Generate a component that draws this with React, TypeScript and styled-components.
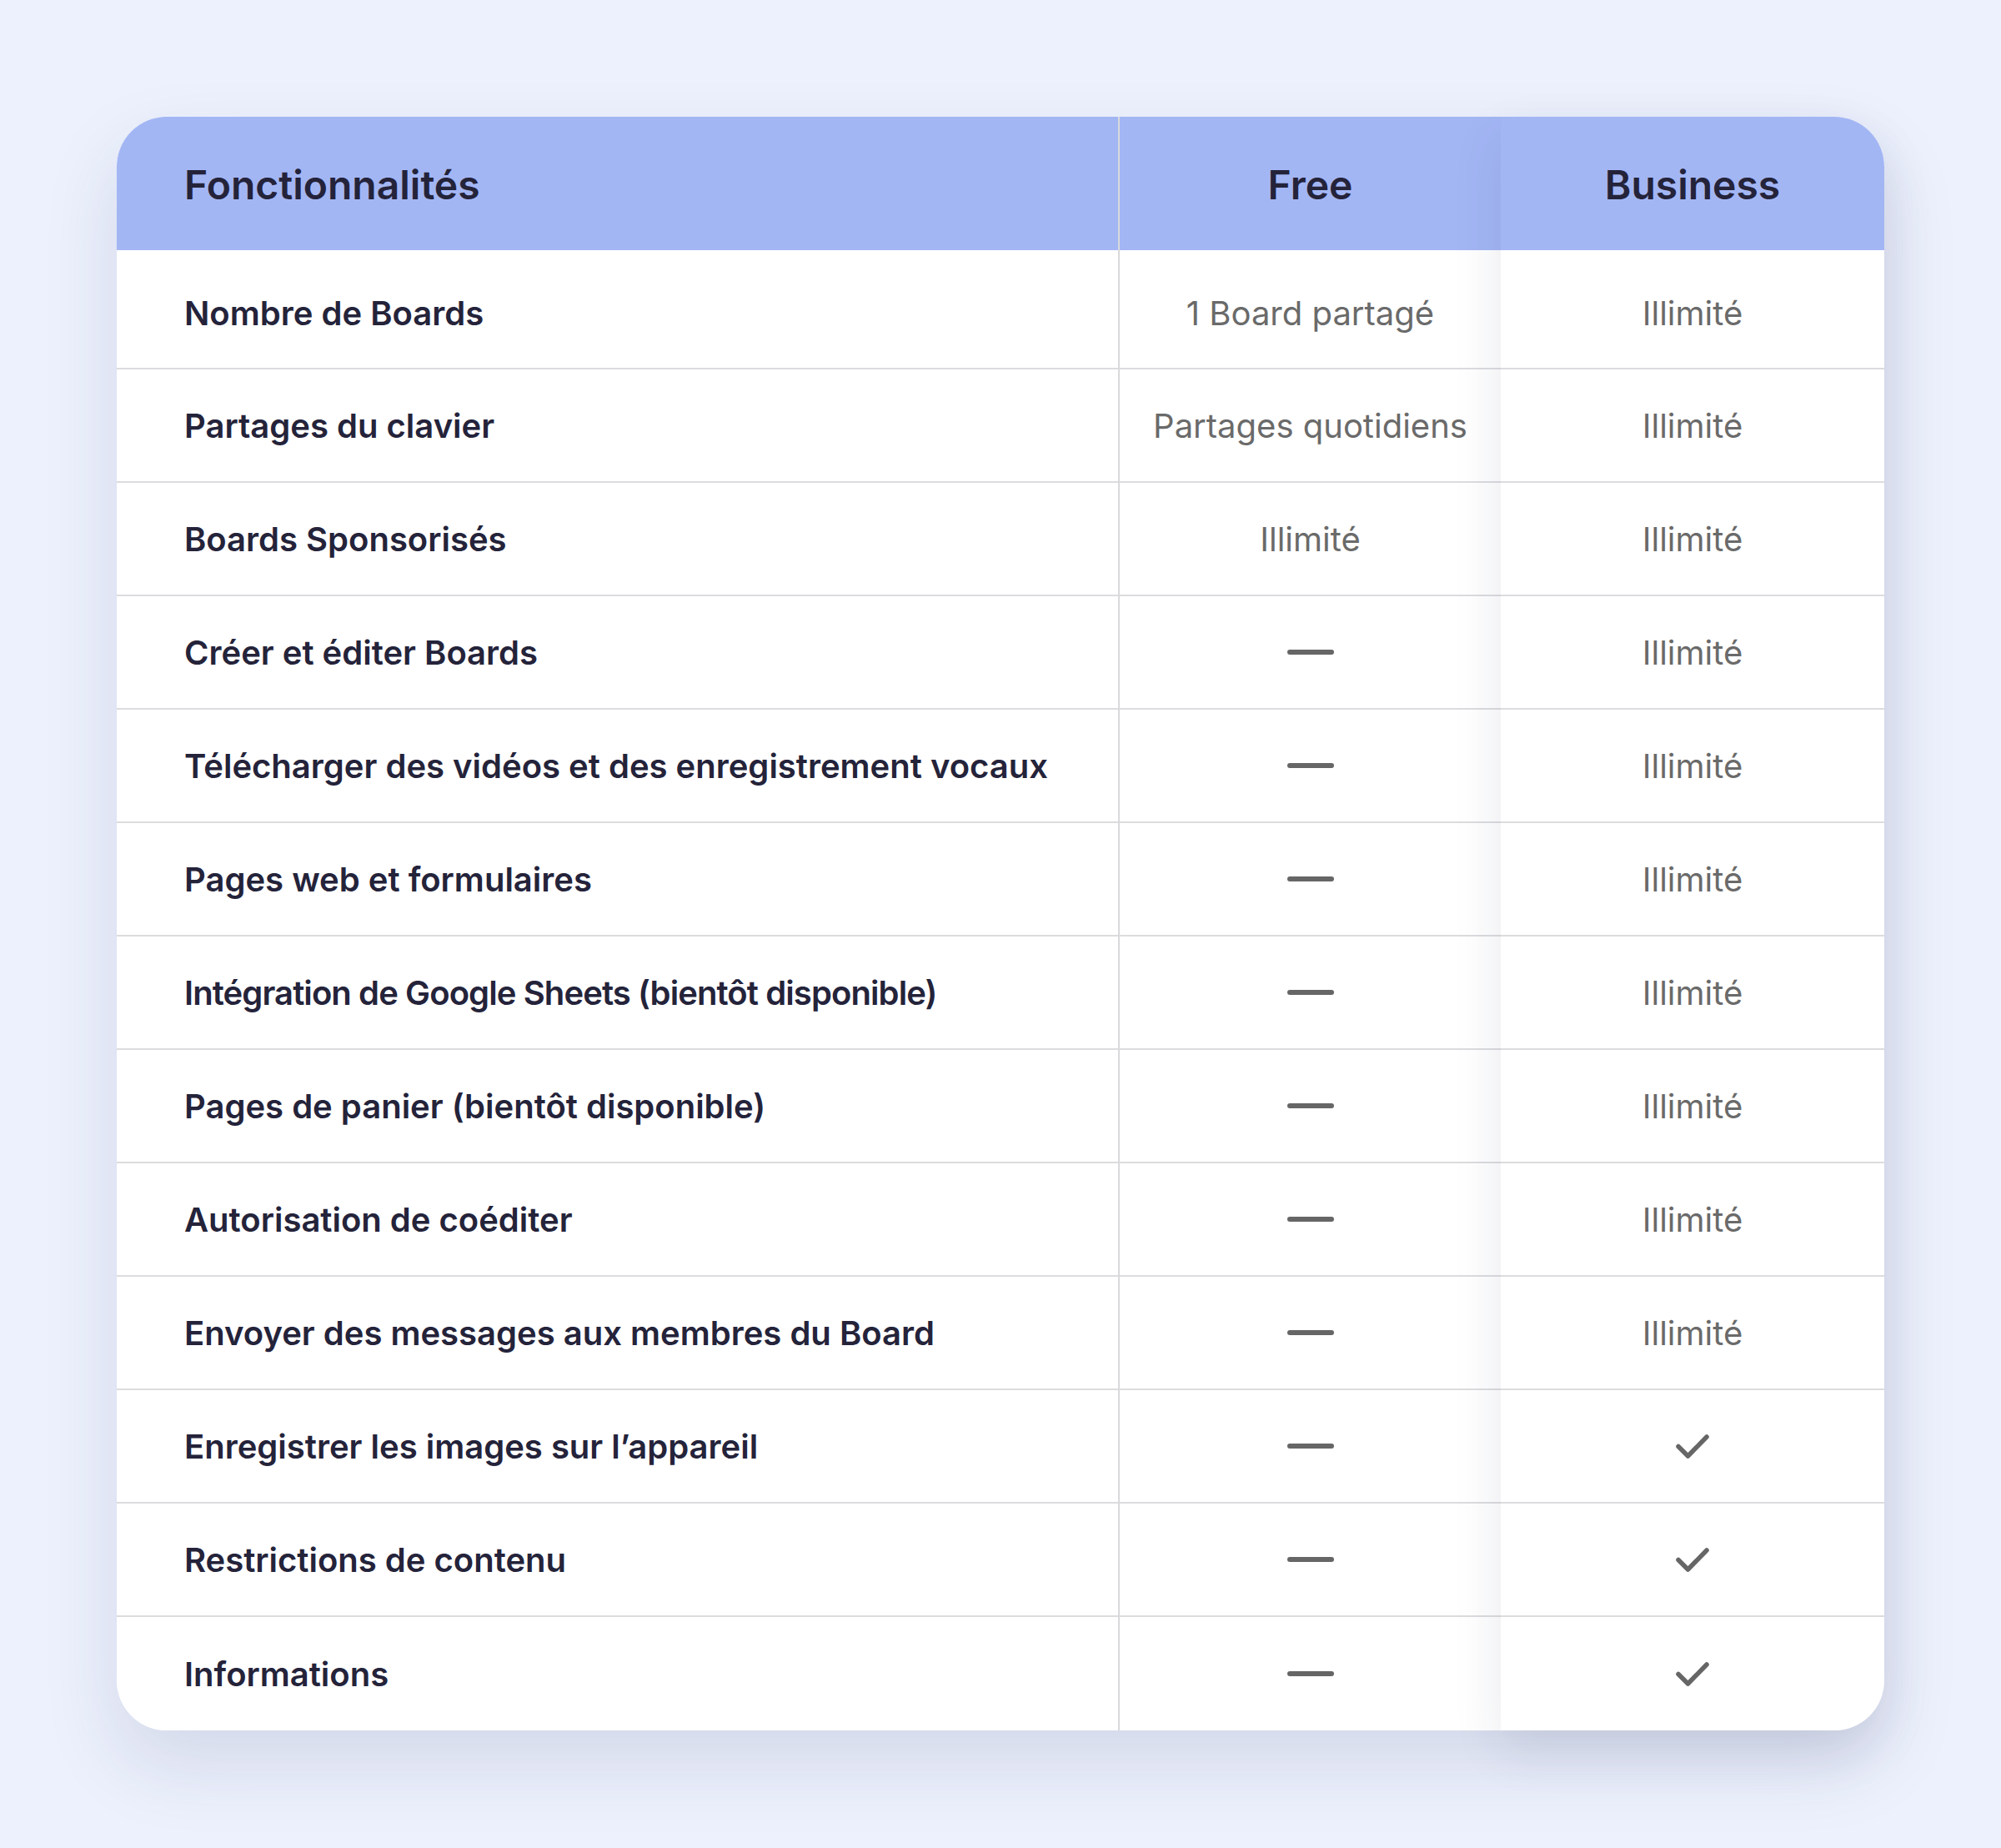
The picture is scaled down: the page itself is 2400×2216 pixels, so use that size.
import React from "react";
import styled, { createGlobalStyle } from "styled-components";

type Value = string | "none" | "yes";

type Feature = {
  label: string;
  free: Value;
  business: Value;
  tight?: boolean;
};

const features: Feature[] = [
  { label: "Nombre de Boards", free: "1 Board partagé", business: "Illimité" },
  { label: "Partages du clavier", free: "Partages quotidiens", business: "Illimité" },
  { label: "Boards Sponsorisés", free: "Illimité", business: "Illimité" },
  { label: "Créer et éditer Boards", free: "none", business: "Illimité" },
  {
    label: "Télécharger des vidéos et des enregistrement vocaux",
    free: "none",
    business: "Illimité",
  },
  { label: "Pages web et formulaires", free: "none", business: "Illimité" },
  {
    label: "Intégration de Google Sheets (bientôt disponible)",
    free: "none",
    business: "Illimité",
    tight: true,
  },
  { label: "Pages de panier (bientôt disponible)", free: "none", business: "Illimité" },
  { label: "Autorisation de coéditer", free: "none", business: "Illimité" },
  {
    label: "Envoyer des messages aux membres du Board",
    free: "none",
    business: "Illimité",
  },
  { label: "Enregistrer les images sur l’appareil", free: "none", business: "yes" },
  { label: "Restrictions de contenu", free: "none", business: "yes" },
  { label: "Informations", free: "none", business: "yes" },
];

const GlobalStyle = createGlobalStyle`
  html, body {
    margin: 0;
    padding: 0;
    background: #edf1fd;
  }
  body {
    font-family: Inter, "Noto Sans", "Liberation Sans", sans-serif;
    -webkit-font-smoothing: antialiased;
  }
`;

const Page = styled.div`
  padding: 140px;
  min-height: 2216px;
  box-sizing: border-box;
`;

const Card = styled.div`
  display: flex;
  width: 2120px;
  border-radius: 60px;
  background: #ffffff;
  box-shadow: 0 40px 90px rgba(40, 52, 100, 0.13);
`;

const Column = styled.div<{ $width: number; $raised?: boolean; $divider?: boolean }>`
  display: flex;
  flex-direction: column;
  width: ${(p) => p.$width}px;
  flex-shrink: 0;
  background: #ffffff;
  position: relative;
  z-index: ${(p) => (p.$raised ? 1 : 0)};
  border-left: ${(p) => (p.$divider ? "2px solid #d9d9dc" : "none")};
  box-sizing: border-box;
  ${(p) =>
    p.$raised
      ? `
    border-top-right-radius: 60px;
    border-bottom-right-radius: 60px;
    box-shadow: 0 24px 60px rgba(30, 40, 80, 0.1);
  `
      : ""}
  &:first-child {
    border-top-left-radius: 60px;
    border-bottom-left-radius: 60px;
  }
`;

const HeadCell = styled.div<{ $align: "left" | "center"; $round?: "left" | "right" }>`
  height: 160px;
  display: flex;
  align-items: center;
  justify-content: ${(p) => (p.$align === "left" ? "flex-start" : "center")};
  padding-left: ${(p) => (p.$align === "left" ? "81px" : "0")};
  padding-top: 3px;
  background: #a3b6f4;
  color: #24233a;
  font-size: 48px;
  font-weight: 600;
  box-sizing: border-box;
  border-top-left-radius: ${(p) => (p.$round === "left" ? "60px" : "0")};
  border-top-right-radius: ${(p) => (p.$round === "right" ? "60px" : "0")};
`;

const Cell = styled.div<{ $align: "left" | "center"; $first?: boolean; $last?: boolean }>`
  height: ${(p) => (p.$first ? 143 : 136)}px;
  display: flex;
  align-items: center;
  justify-content: ${(p) => (p.$align === "left" ? "flex-start" : "center")};
  padding-left: ${(p) => (p.$align === "left" ? "81px" : "0")};
  padding-top: ${(p) => (p.$first ? 10 : 0)}px;
  border-bottom: ${(p) => (p.$last ? "none" : "2px solid #dcdcdf")};
  box-sizing: border-box;
`;

const Label = styled.span<{ $tight?: boolean }>`
  color: #24233a;
  font-size: 40px;
  font-weight: 600;
  letter-spacing: ${(p) => (p.$tight ? "-0.9px" : "0")};
  white-space: nowrap;
`;

const ValueText = styled.span`
  color: #6a6a6a;
  font-size: 40px;
  font-weight: 400;
  white-space: nowrap;
`;

const Dash = styled.span`
  display: block;
  width: 56px;
  height: 6px;
  border-radius: 3px;
  background: #666666;
`;

const Check = () => (
  <svg width="42" height="31" viewBox="0 0 42 31" fill="none">
    <path
      d="M4 15.5 L15.5 27 L38 4"
      stroke="#666666"
      strokeWidth="5.5"
      strokeLinecap="round"
      strokeLinejoin="round"
    />
  </svg>
);

const renderValue = (v: Value) => {
  if (v === "none") return <Dash />;
  if (v === "yes") return <Check />;
  return <ValueText>{v}</ValueText>;
};

export default function App() {
  const last = features.length - 1;
  return (
    <>
      <GlobalStyle />
      <Page>
        <Card>
          <Column $width={1201}>
            <HeadCell $align="left" $round="left">
              Fonctionnalités
            </HeadCell>
            {features.map((f, i) => (
              <Cell key={f.label} $align="left" $first={i === 0} $last={i === last}>
                <Label $tight={f.tight}>{f.label}</Label>
              </Cell>
            ))}
          </Column>
          <Column $width={459} $divider>
            <HeadCell $align="center">Free</HeadCell>
            {features.map((f, i) => (
              <Cell key={f.label} $align="center" $first={i === 0} $last={i === last}>
                {renderValue(f.free)}
              </Cell>
            ))}
          </Column>
          <Column $width={460} $raised>
            <HeadCell $align="center" $round="right">
              Business
            </HeadCell>
            {features.map((f, i) => (
              <Cell key={f.label} $align="center" $first={i === 0} $last={i === last}>
                {renderValue(f.business)}
              </Cell>
            ))}
          </Column>
        </Card>
      </Page>
    </>
  );
}
